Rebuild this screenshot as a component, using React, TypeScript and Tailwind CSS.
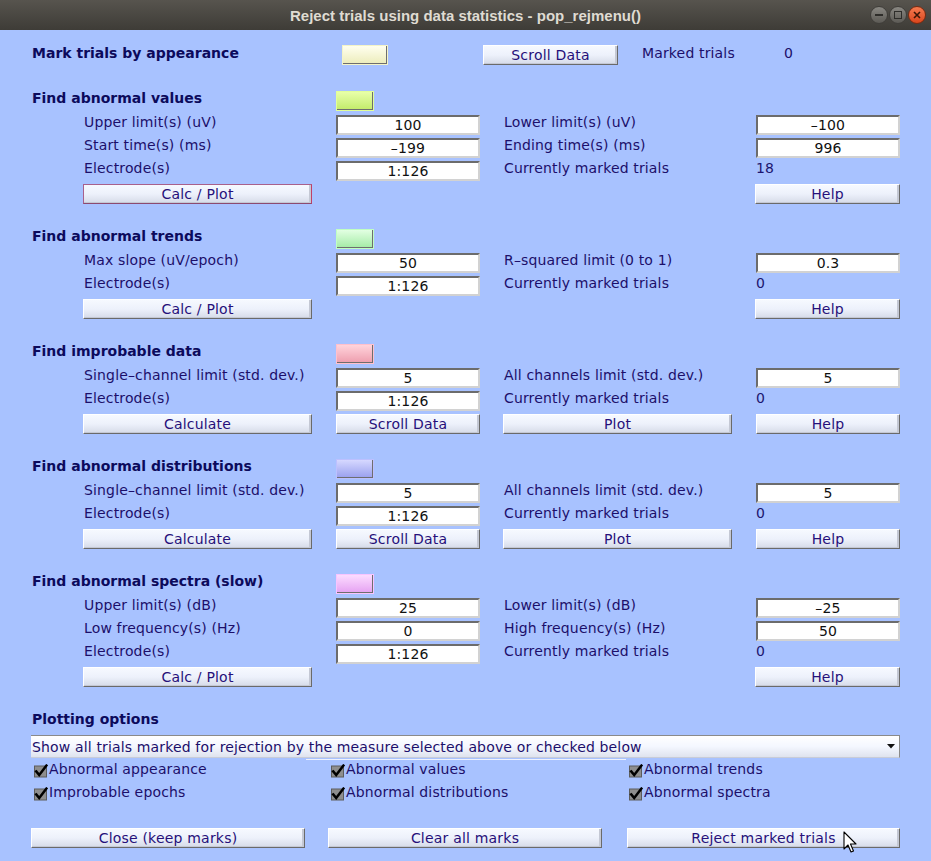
import React from "react";

const LABEL = "text-[#1c0f6a] leading-[14px] whitespace-nowrap tracking-[0.15px]";

function Input({ v }: { v: string }) {
  return (
    <div className="w-[144px] h-[20px] bg-white border-t-2 border-l-2 border-t-[#6c6c6c] border-l-[#6c6c6c] border-b-2 border-r-2 border-b-[#d2d2d2] border-r-[#d2d2d2] flex items-center justify-center text-[#111111] leading-[14px] tracking-[0.15px]">
      {v}
    </div>
  );
}

function Btn({ w, label, focus }: { w: string; label: string; focus?: boolean }) {
  const border = focus
    ? "border border-t-[#a8608c] border-l-[#a8608c] border-b-[#8c4a70] border-r-[#c04068]"
    : "border border-t-white border-l-white border-b-[#6a6a6a] border-r-[#6a6a6a]";
  return (
    <div
      className={`${w} h-[20px] ${border} bg-linear-to-b from-[#f6f9ff] via-[#edf1fb] to-[#d6dbe8] flex items-center justify-center text-[#26107a] leading-[14px] tracking-[0.2px] shadow-[inset_-2px_-1px_0_#c4c8d4]`}
    >
      {label}
    </div>
  );
}

function Swatch({ outer, inner, w }: { outer: string; inner: string; w: string }) {
  return (
    <div className={`${w} h-[20px] border ${outer}`}>
      <div className={`w-full h-full border-b border-r border-b-[#6e6e6e] border-r-[#6e6e6e] ${inner}`} />
    </div>
  );
}

function Header({ title, outer, inner }: { title: string; outer: string; inner: string }) {
  return (
    <div className="flex h-[20px] pl-[32px] mb-[4px]">
      <div className="w-[304px] font-bold text-[#0c0a5c] leading-[14px] whitespace-nowrap">{title}</div>
      <Swatch w="w-[38px]" outer={outer} inner={inner} />
    </div>
  );
}

function Row({ l1, v1, l2, v2, plain }: { l1: string; v1: string; l2: string; v2: string; plain?: boolean }) {
  return (
    <div className="flex h-[20px] pl-[84px] mb-[3px]">
      <div className={`w-[252px] ${LABEL}`}>{l1}</div>
      <Input v={v1} />
      <div className={`ml-[24px] w-[252px] ${LABEL}`}>{l2}</div>
      {plain ? <div className={`${LABEL} text-[#1d1670]`}>{v2}</div> : <Input v={v2} />}
    </div>
  );
}

function ButtonRow({ first, focus, four }: { first: string; focus?: boolean; four?: boolean }) {
  return (
    <div className="flex h-[20px] pl-[83px]">
      <Btn w="w-[229px]" label={first} focus={focus} />
      {four ? (
        <>
          <div className="ml-[24px]">
            <Btn w="w-[144px]" label="Scroll Data" />
          </div>
          <div className="ml-[23px]">
            <Btn w="w-[229px]" label="Plot" />
          </div>
          <div className="ml-[24px]">
            <Btn w="w-[144px]" label="Help" />
          </div>
        </>
      ) : (
        <div className="ml-[443px]">
          <Btn w="w-[145px]" label="Help" />
        </div>
      )}
    </div>
  );
}

function Check({ label }: { label: string }) {
  return (
    <div className="flex items-start">
      <svg width="14" height="14" viewBox="0 0 14 14" className="mt-[2px] shrink-0">
        <rect x="0.5" y="2" width="12" height="11" fill="#8e8e8e" stroke="#5c5c5c" />
        <path d="M2.2 7.4 L5.2 11 L12.4 1.6" stroke="#000" strokeWidth="2.5" fill="none" strokeLinecap="square" />
      </svg>
      <div className={`ml-[1px] ${LABEL}`}>{label}</div>
    </div>
  );
}

export default function App() {
  return (
    <div className="relative w-[931px] h-[861px] overflow-hidden bg-[#a8c2ff] font-['DejaVu_Sans',sans-serif] text-[14px]">
      {/* Title bar */}
      <div className="grid grid-cols-[1fr_auto_1fr] items-center h-[30px] bg-linear-to-b from-[#57544e] to-[#3e3c37]">
        <div />
        <div className="font-['Liberation_Sans',sans-serif] font-bold text-[15px] text-[#dfdbd2] leading-none">
          Reject trials using data statistics - pop_rejmenu()
        </div>
        <div className="flex justify-end items-center gap-[1px] pr-[5px]">
          <div className="w-[18px] h-[18px] rounded-full bg-linear-to-b from-[#8a8883] to-[#5c5a55] border border-[#403e3a] flex items-center justify-center">
            <div className="w-[8px] h-[2px] bg-[#2e2d2a]" />
          </div>
          <div className="w-[18px] h-[18px] rounded-full bg-linear-to-b from-[#8a8883] to-[#5c5a55] border border-[#403e3a] flex items-center justify-center">
            <div className="w-[8px] h-[8px] border-[1.5px] border-[#2e2d2a]" />
          </div>
          <div className="w-[18px] h-[18px] rounded-full bg-linear-to-b from-[#f47a4f] to-[#d9441a] border border-[#7a2a10] flex items-center justify-center">
            <svg width="8" height="8" viewBox="0 0 8 8">
              <path d="M1 1 L7 7 M7 1 L1 7" stroke="#3a1606" strokeWidth="1.6" />
            </svg>
          </div>
        </div>
      </div>

      {/* Mark trials row */}
      <div className="flex h-[20px] mt-[15px] pl-[32px]">
        <div className="w-[310px] font-bold text-[#0c0a5c] leading-[14px] whitespace-nowrap pt-[1px]">Mark trials by appearance</div>
        <Swatch
          w="w-[46px]"
          outer="border-[#f4f4c8]"
          inner="bg-linear-to-b from-[#ffffef] to-[#ededbd]"
        />
        <div className="ml-[95px]">
          <Btn w="w-[135px]" label="Scroll Data" />
        </div>
        <div className={`ml-[24px] w-[142px] ${LABEL} pt-[1px]`}>Marked trials</div>
        <div className={`${LABEL} pt-[1px]`}>0</div>
      </div>

      {/* Find abnormal values */}
      <div className="mt-[26px]">
        <Header
          title="Find abnormal values"
          outer="border-[#e2ff98]"
          inner="bg-linear-to-b from-[#e8ffa8] to-[#c4ec6c]"
        />
        <Row l1="Upper limit(s) (uV)" v1="100" l2="Lower limit(s) (uV)" v2="–100" />
        <Row l1="Start time(s) (ms)" v1="–199" l2="Ending time(s) (ms)" v2="996" />
        <Row l1="Electrode(s)" v1="1:126" l2="Currently marked trials" v2="18" plain />
        <ButtonRow first="Calc / Plot" focus />
      </div>

      {/* Find abnormal trends */}
      <div className="mt-[25px]">
        <Header
          title="Find abnormal trends"
          outer="border-[#c0ffc2]"
          inner="bg-linear-to-b from-[#e2ffe2] to-[#a6eca8]"
        />
        <Row l1="Max slope (uV/epoch)" v1="50" l2="R–squared limit (0 to 1)" v2="0.3" />
        <Row l1="Electrode(s)" v1="1:126" l2="Currently marked trials" v2="0" plain />
        <ButtonRow first="Calc / Plot" />
      </div>

      {/* Find improbable data */}
      <div className="mt-[25px]">
        <Header
          title="Find improbable data"
          outer="border-[#ffc0cc]"
          inner="bg-linear-to-b from-[#ffd4dc] to-[#eea0b0]"
        />
        <Row l1="Single–channel limit (std. dev.)" v1="5" l2="All channels limit (std. dev.)" v2="5" />
        <Row l1="Electrode(s)" v1="1:126" l2="Currently marked trials" v2="0" plain />
        <ButtonRow first="Calculate" four />
      </div>

      {/* Find abnormal distributions */}
      <div className="mt-[25px]">
        <Header
          title="Find abnormal distributions"
          outer="border-[#bcc0ff]"
          inner="bg-linear-to-b from-[#d6d8ff] to-[#9ca2ee]"
        />
        <Row l1="Single–channel limit (std. dev.)" v1="5" l2="All channels limit (std. dev.)" v2="5" />
        <Row l1="Electrode(s)" v1="1:126" l2="Currently marked trials" v2="0" plain />
        <ButtonRow first="Calculate" four />
      </div>

      {/* Find abnormal spectra */}
      <div className="mt-[25px]">
        <Header
          title="Find abnormal spectra (slow)"
          outer="border-[#f8c4ff]"
          inner="bg-linear-to-b from-[#fcdcff] to-[#e6a4f2]"
        />
        <Row l1="Upper limit(s) (dB)" v1="25" l2="Lower limit(s) (dB)" v2="–25" />
        <Row l1="Low frequency(s) (Hz)" v1="0" l2="High frequency(s) (Hz)" v2="50" />
        <Row l1="Electrode(s)" v1="1:126" l2="Currently marked trials" v2="0" plain />
        <ButtonRow first="Calc / Plot" />
      </div>

      {/* Plotting options */}
      <div className="mt-[25px] pl-[32px] h-[20px] mb-[3px] font-bold text-[#0c0a5c] leading-[14px]">Plotting options</div>
      <div className="relative ml-[31px] w-[869px] h-[23px]">
        <div className="w-full h-full flex items-center justify-between pl-[1px] pr-[4px] bg-linear-to-b from-[#ffffff] via-[#f4f7ff] to-[#dfe3ee] border-t border-r border-t-[#8a8a8a] border-r-[#8a8a8a] border-b border-b-[#c8ccd8]">
          <div className={`${LABEL} whitespace-nowrap`}>Show all trials marked for rejection by the measure selected above or checked below</div>
          <svg width="8" height="5" viewBox="0 0 8 5">
            <path d="M0 0 L8 0 L4 4.5 Z" fill="#111" />
          </svg>
        </div>
        <div className="absolute left-[275px] top-[24px] w-[320px] h-[1px] bg-[#eef2ff]" />
      </div>
      <div className="grid grid-cols-[297px_298px_1fr] pl-[34px] mt-[4px]">
        <div className="h-[23px]"><Check label="Abnormal appearance" /></div>
        <div className="h-[23px]"><Check label="Abnormal values" /></div>
        <div className="h-[23px]"><Check label="Abnormal trends" /></div>
        <div className="h-[23px]"><Check label="Improbable epochs" /></div>
        <div className="h-[23px]"><Check label="Abnormal distributions" /></div>
        <div className="h-[23px]"><Check label="Abnormal spectra" /></div>
      </div>

      {/* Bottom buttons */}
      <div className="flex pl-[31px] mt-[20px]">
        <Btn w="w-[274px]" label="Close (keep marks)" />
        <div className="ml-[23px]">
          <Btn w="w-[274px]" label="Clear all marks" />
        </div>
        <div className="ml-[25px]">
          <Btn w="w-[273px]" label="Reject marked trials" />
        </div>
      </div>

      {/* Mouse cursor */}
      <svg className="absolute left-[843px] top-[831px]" width="16" height="24" viewBox="0 0 16 24">
        <path d="M1 1 L1 18 L5 14 L8 21 L10.5 20 L7.5 13 L13 13 Z" fill="#fff" stroke="#000" strokeWidth="1.1" strokeLinejoin="round" />
      </svg>
    </div>
  );
}
